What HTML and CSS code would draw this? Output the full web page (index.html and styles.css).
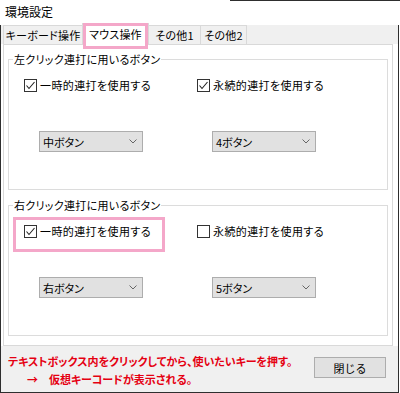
FILE: index.html
```html
<!DOCTYPE html>
<html lang="ja">
<head>
    <meta charset="UTF-8">
    <meta name="viewport" content="width=device-width, initial-scale=1.0">
    <title>環境設定</title>
    <link rel="stylesheet" href="styles.css">
</head>
<body>
    <div class="titlebar">環境設定</div>
    <div class="frame">
        <div class="tabs">
            <div class="tab tab-keyboard">キーボード操作</div>
            <div class="tab tab-mouse active">マウス操作<span class="mark mark-tab"></span></div>
            <div class="tab tab-other1">その他1</div>
            <div class="tab tab-other2">その他2</div>
        </div>
        <div class="page">
            <fieldset class="group">
                <legend>左クリック連打に用いるボタン</legend>
                <div class="group-body">
                    <label class="check">
                        <svg class="box" width="13" height="13" viewBox="0 0 13 13"><rect x="0.5" y="0.5" width="12" height="12" fill="#fff" stroke="#333"/><polyline points="2.5,6.5 5,9.5 10.5,3" fill="none" stroke="#222" stroke-width="1.1"/></svg>
                        一時的連打を使用する
                    </label>
                    <label class="check">
                        <svg class="box" width="13" height="13" viewBox="0 0 13 13"><rect x="0.5" y="0.5" width="12" height="12" fill="#fff" stroke="#333"/><polyline points="2.5,6.5 5,9.5 10.5,3" fill="none" stroke="#222" stroke-width="1.1"/></svg>
                        永続的連打を使用する
                    </label>
                    <div class="combo">中ボタン<svg class="arrow" width="8" height="5" viewBox="0 0 8 5"><polyline points="0.5,0.5 4,4 7.5,0.5" fill="none" stroke="#666"/></svg></div>
                    <div class="combo">4ボタン<svg class="arrow" width="8" height="5" viewBox="0 0 8 5"><polyline points="0.5,0.5 4,4 7.5,0.5" fill="none" stroke="#666"/></svg></div>
                </div>
            </fieldset>
            <fieldset class="group group-right">
                <legend>右クリック連打に用いるボタン</legend>
                <div class="group-body">
                    <label class="check">
                        <svg class="box" width="13" height="13" viewBox="0 0 13 13"><rect x="0.5" y="0.5" width="12" height="12" fill="#fff" stroke="#333"/><polyline points="2.5,6.5 5,9.5 10.5,3" fill="none" stroke="#222" stroke-width="1.1"/></svg>
                        一時的連打を使用する
                        <span class="mark mark-check"></span>
                    </label>
                    <label class="check">
                        <svg class="box" width="13" height="13" viewBox="0 0 13 13"><rect x="0.5" y="0.5" width="12" height="12" fill="#fff" stroke="#333"/></svg>
                        永続的連打を使用する
                    </label>
                    <div class="combo">右ボタン<svg class="arrow" width="8" height="5" viewBox="0 0 8 5"><polyline points="0.5,0.5 4,4 7.5,0.5" fill="none" stroke="#666"/></svg></div>
                    <div class="combo">5ボタン<svg class="arrow" width="8" height="5" viewBox="0 0 8 5"><polyline points="0.5,0.5 4,4 7.5,0.5" fill="none" stroke="#666"/></svg></div>
                </div>
            </fieldset>
        </div>
        <div class="footer">
            <div class="note">
                <p>テキストボックス内をクリックしてから、使いたいキーを押す。</p>
                <p class="indent">→　仮想キーコードが表示される。</p>
            </div>
            <button class="btn">閉じる</button>
        </div>
    </div>
</body>
</html>
```

FILE: styles.css
```css
body {
    margin: 0;
    width: 400px;
    height: 393px;
    overflow: hidden;
    background: #fff;
    color: #000;
    font-family: "Noto Sans CJK JP", "Noto Sans", sans-serif;
    font-size: 11px;
    font-feature-settings: "palt";
}
.titlebar {
    height: 25px;
    line-height: 24px;
    padding-left: 5px;
    font-size: 12px;
    box-sizing: border-box;
    background: linear-gradient(#2e2e2e, #2e2e2e) no-repeat right top / 170px 1px;
}
.frame {
    width: 399px;
    height: 368px;
    box-sizing: border-box;
    border: 1px solid #2e2e2e;
    border-top: none;
    display: flex;
    flex-direction: column;
}
/* tab strip */
.tabs {
    display: flex;
    height: 19px;
    padding-left: 2px;
    background: #f0f0f0;
    position: relative;
    z-index: 1;
}
.tab {
    height: 19px;
    box-sizing: border-box;
    border: 1px solid #d9d9d9;
    border-bottom: none;
    margin-right: -1px;
    background: #f0f0f0;
    text-align: center;
    line-height: 19px;
    white-space: nowrap;
    letter-spacing: 0.2px;
}
.tab-keyboard { width: 80px; }
.tab-mouse { width: 67px; }
.tab-other1 { width: 53px; }
.tab-other2 { width: 47px; }
.tab.active {
    background: #fff;
    height: 22px;
    margin-top: -2px;
    line-height: 21px;
    position: relative;
    z-index: 2;
}
.mark {
    position: absolute;
    border: 3px solid #f4a7c9;
    box-sizing: border-box;
    pointer-events: none;
}
.mark-tab {
    left: 0;
    top: -1px;
    width: 65px;
    height: 26px;
}
/* tab page */
.page {
    margin-left: 2px;
    width: 390px;
    height: 302px;
    box-sizing: border-box;
    border: 1px solid #d9d9d9;
    background: #fff;
    padding: 7px 4px 9px 4px;
}
.group {
    margin: 0;
    padding: 0;
    width: 380px;
    box-sizing: border-box;
    border: 1px solid #dcdcdc;
    min-inline-size: 0;
}
.group-right {
    margin-top: 8px;
}
.group legend {
    margin-left: 4px;
    padding: 0 1px;
    line-height: 14px;
    letter-spacing: 0.3px;
}
.group-body {
    display: grid;
    grid-template-columns: 173px 1fr;
    padding: 12px 0 37px 15px;
}
.check {
    display: flex;
    align-items: center;
    height: 14px;
    line-height: 14px;
    position: relative;
    white-space: nowrap;
    letter-spacing: 0.4px;
}
.check .box {
    margin-right: 3px;
    flex: none;
}
.mark-check {
    left: -11px;
    top: -7px;
    width: 152px;
    height: 35px;
}
.combo {
    margin-top: 39px;
    margin-left: 15px;
    width: 104px;
    height: 21px;
    box-sizing: border-box;
    border: 1px solid #adadad;
    background: #e1e1e1;
    display: flex;
    align-items: center;
    padding-left: 3px;
}
.combo .arrow {
    margin-left: auto;
    margin-right: 5px;
}
/* bottom bar */
.footer {
    flex: 1;
    background: #f0f0f0;
    display: flex;
    justify-content: space-between;
    padding: 6px 12px 0 7px;
}
.note p {
    margin: 0;
    line-height: 18px;
    color: #e50012;
    font-weight: bold;
}
.note .indent {
    padding-left: 19px;
}
.btn {
    margin-top: 5px;
    width: 72px;
    height: 21px;
    border: 1px solid #adadad;
    background: #e1e1e1;
    font-family: inherit;
    font-size: 11px;
    padding: 0;
    color: #000;
}
```
